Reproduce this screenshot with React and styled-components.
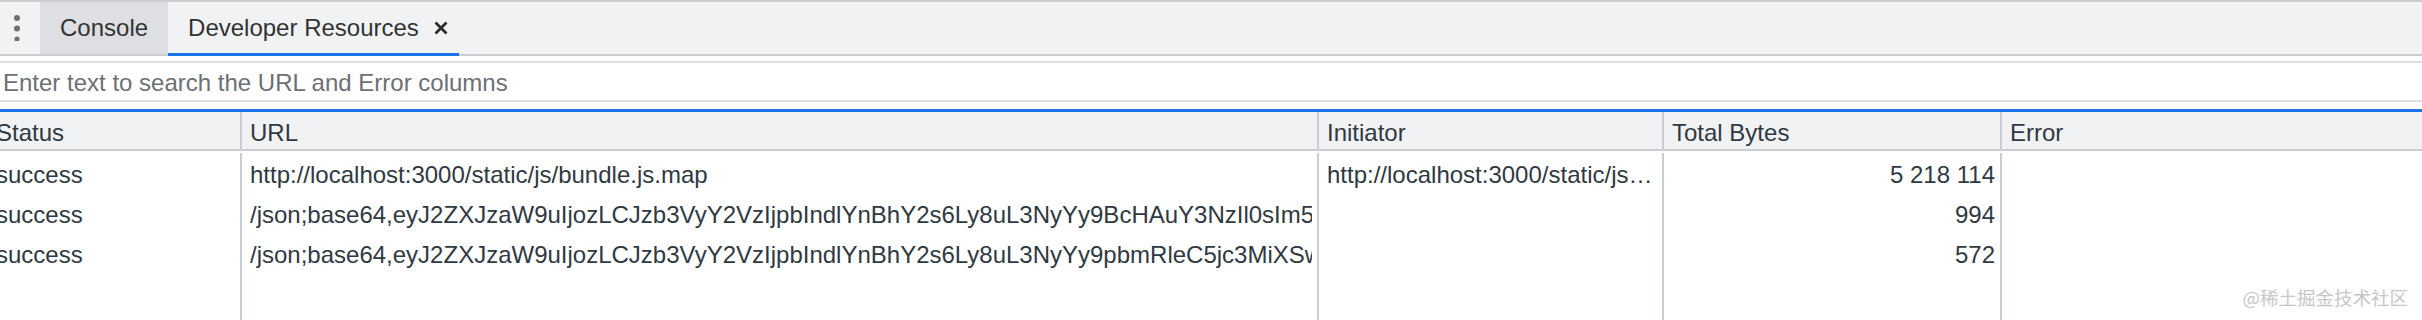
import React from 'react'
import styled, { createGlobalStyle, css } from 'styled-components'

const GlobalStyle = createGlobalStyle`
  html, body {
    margin: 0;
    padding: 0;
    background: #fff;
  }
  body {
    font-family: "Liberation Sans", Arial, sans-serif;
  }
`

const Panel = styled.div`
  position: relative;
  width: 2422px;
  height: 320px;
  overflow: hidden;
  display: flex;
  flex-direction: column;
  background: #fff;
`

const TabBar = styled.div`
  display: flex;
  height: 52px;
  flex-shrink: 0;
  border-top: 2px solid #cbcdd1;
  border-bottom: 2px solid #cbcdd1;
  background: #f1f2f4;
`

const MenuButton = styled.div`
  width: 40px;
  display: flex;
  align-items: center;
  padding-left: 14px;
  box-sizing: border-box;
  color: #6e6f72;
`

const Tab = styled.div`
  position: relative;
  display: flex;
  align-items: center;
  gap: 15px;
  padding: 0 20px;
  font-size: 24px;
  color: #333;
  background: ${p => (p.$dimmed ? '#dedfe3' : 'transparent')};

  ${p => p.$active && css`
    padding-right: 11px;
    &::after {
      content: '';
      position: absolute;
      left: 0;
      right: 0;
      bottom: -2px;
      height: 3px;
      background: #1a73e8;
    }
  `}
`

const CloseIcon = styled.svg`
  width: 14px;
  height: 14px;
  color: #2a2a2a;
`

const Toolbar = styled.div`
  flex-shrink: 0;
  padding: 5px 0 7px;
  background: #fff;
`

const SearchInput = styled.input`
  display: block;
  width: 100%;
  box-sizing: border-box;
  height: 41px;
  margin: 0;
  padding: 3px 0 0 3px;
  border: none;
  border-top: 2px solid #dedfe1;
  border-bottom: 2px solid #dedfe1;
  outline: none;
  background: #fff;
  font-family: "Liberation Sans", Arial, sans-serif;
  font-size: 24px;
  color: #303942;

  &::placeholder {
    color: #6c7075;
    opacity: 1;
  }
`

const Viewport = styled.div`
  flex: 1;
  display: flex;
  flex-direction: column;
  border-top: 3px solid #1a73e8;
  overflow: hidden;
`

const Grid = styled.div`
  flex: 1;
  display: grid;
  grid-template-columns: 254px 1077px 345px 338px 1fr;
  grid-template-rows: 41px repeat(3, 40px) 1fr;
  margin-left: -12px;
  font-size: 24px;
  color: #303942;
`

const HeaderCell = styled.div`
  height: 39px;
  box-sizing: border-box;
  padding: 3px 8px 0;
  line-height: 36px;
  background: #f1f2f4;
  border-bottom: 2px solid #cacdd1;
  border-right: ${p => (p.$last ? 'none' : '2px solid #cacdd1')};
  white-space: nowrap;
  overflow: hidden;
`

const Cell = styled.div`
  padding: 3px 8px 0;
  line-height: 37px;
  border-right: ${p => (p.$last ? 'none' : '2px solid #cacdd1')};
  text-align: ${p => p.$align || 'left'};
  min-width: 0;
`

const CellText = styled.div`
  white-space: nowrap;
  overflow: hidden;
  text-overflow: ${p => (p.$ellipsis ? 'ellipsis' : 'clip')};
  margin-right: ${p => (p.$ellipsis ? '0' : '-3px')};
`

const Watermark = styled.div`
  position: absolute;
  right: 14px;
  bottom: 14px;
  font-family: "Noto Sans CJK SC", sans-serif;
  font-size: 18.5px;
  line-height: 1;
  color: #c6c7c9;
`

const columns = [
  { key: 'status', title: 'Status' },
  { key: 'url', title: 'URL' },
  { key: 'initiator', title: 'Initiator', ellipsis: true },
  { key: 'bytes', title: 'Total Bytes', align: 'right' },
  { key: 'error', title: 'Error' },
]

const rows = [
  {
    status: 'success',
    url: 'http://localhost:3000/static/js/bundle.js.map',
    initiator: 'http://localhost:3000/static/js/bundle.js',
    bytes: '5 218 114',
    error: '',
  },
  {
    status: 'success',
    url: '/json;base64,eyJ2ZXJzaW9uIjozLCJzb3VyY2VzIjpbIndlYnBhY2s6Ly8uL3NyYy9BcHAuY3NzIl0sIm5hbWVzIjpbXSwibWFwcGluZ3MiOiJBQUFBIn0=',
    initiator: '',
    bytes: '994',
    error: '',
  },
  {
    status: 'success',
    url: '/json;base64,eyJ2ZXJzaW9uIjozLCJzb3VyY2VzIjpbIndlYnBhY2s6Ly8uL3NyYy9pbmRleC5jc3MiXSwibmFtZXMiOltdLCJtYXBwaW5ncyI6IkFBQUEifQ==',
    initiator: '',
    bytes: '572',
    error: '',
  },
]

const Dots = () => (
  <svg width="6" height="26" viewBox="0 0 6 26">
    <circle cx="3" cy="3" r="3" fill="currentColor" />
    <circle cx="3" cy="13.5" r="3" fill="currentColor" />
    <circle cx="3" cy="24" r="2.6" fill="currentColor" />
  </svg>
)

export default function App() {
  return (
    <>
      <GlobalStyle />
      <Panel>
        <TabBar>
          <MenuButton>
            <Dots />
          </MenuButton>
          <Tab $dimmed>Console</Tab>
          <Tab $active>
            Developer Resources
            <CloseIcon viewBox="0 0 14 14">
              <path d="M1.5 1.5 L12.5 12.5 M12.5 1.5 L1.5 12.5" stroke="currentColor" strokeWidth="2.8" />
            </CloseIcon>
          </Tab>
        </TabBar>

        <Toolbar>
          <SearchInput placeholder="Enter text to search the URL and Error columns" />
        </Toolbar>

        <Viewport>
          <Grid>
            {columns.map((c, i) => (
              <HeaderCell key={c.key} $last={i === columns.length - 1}>
                {c.title}
              </HeaderCell>
            ))}
            {rows.map((r, ri) =>
              columns.map((c, i) => (
                <Cell key={ri + c.key} $last={i === columns.length - 1} $align={c.align}>
                  <CellText $ellipsis={c.ellipsis}>{r[c.key]}</CellText>
                </Cell>
              ))
            )}
            {columns.map((c, i) => (
              <Cell key={'fill' + c.key} $last={i === columns.length - 1} />
            ))}
          </Grid>
        </Viewport>

        <Watermark>@稀土掘金技术社区</Watermark>
      </Panel>
    </>
  )
}
